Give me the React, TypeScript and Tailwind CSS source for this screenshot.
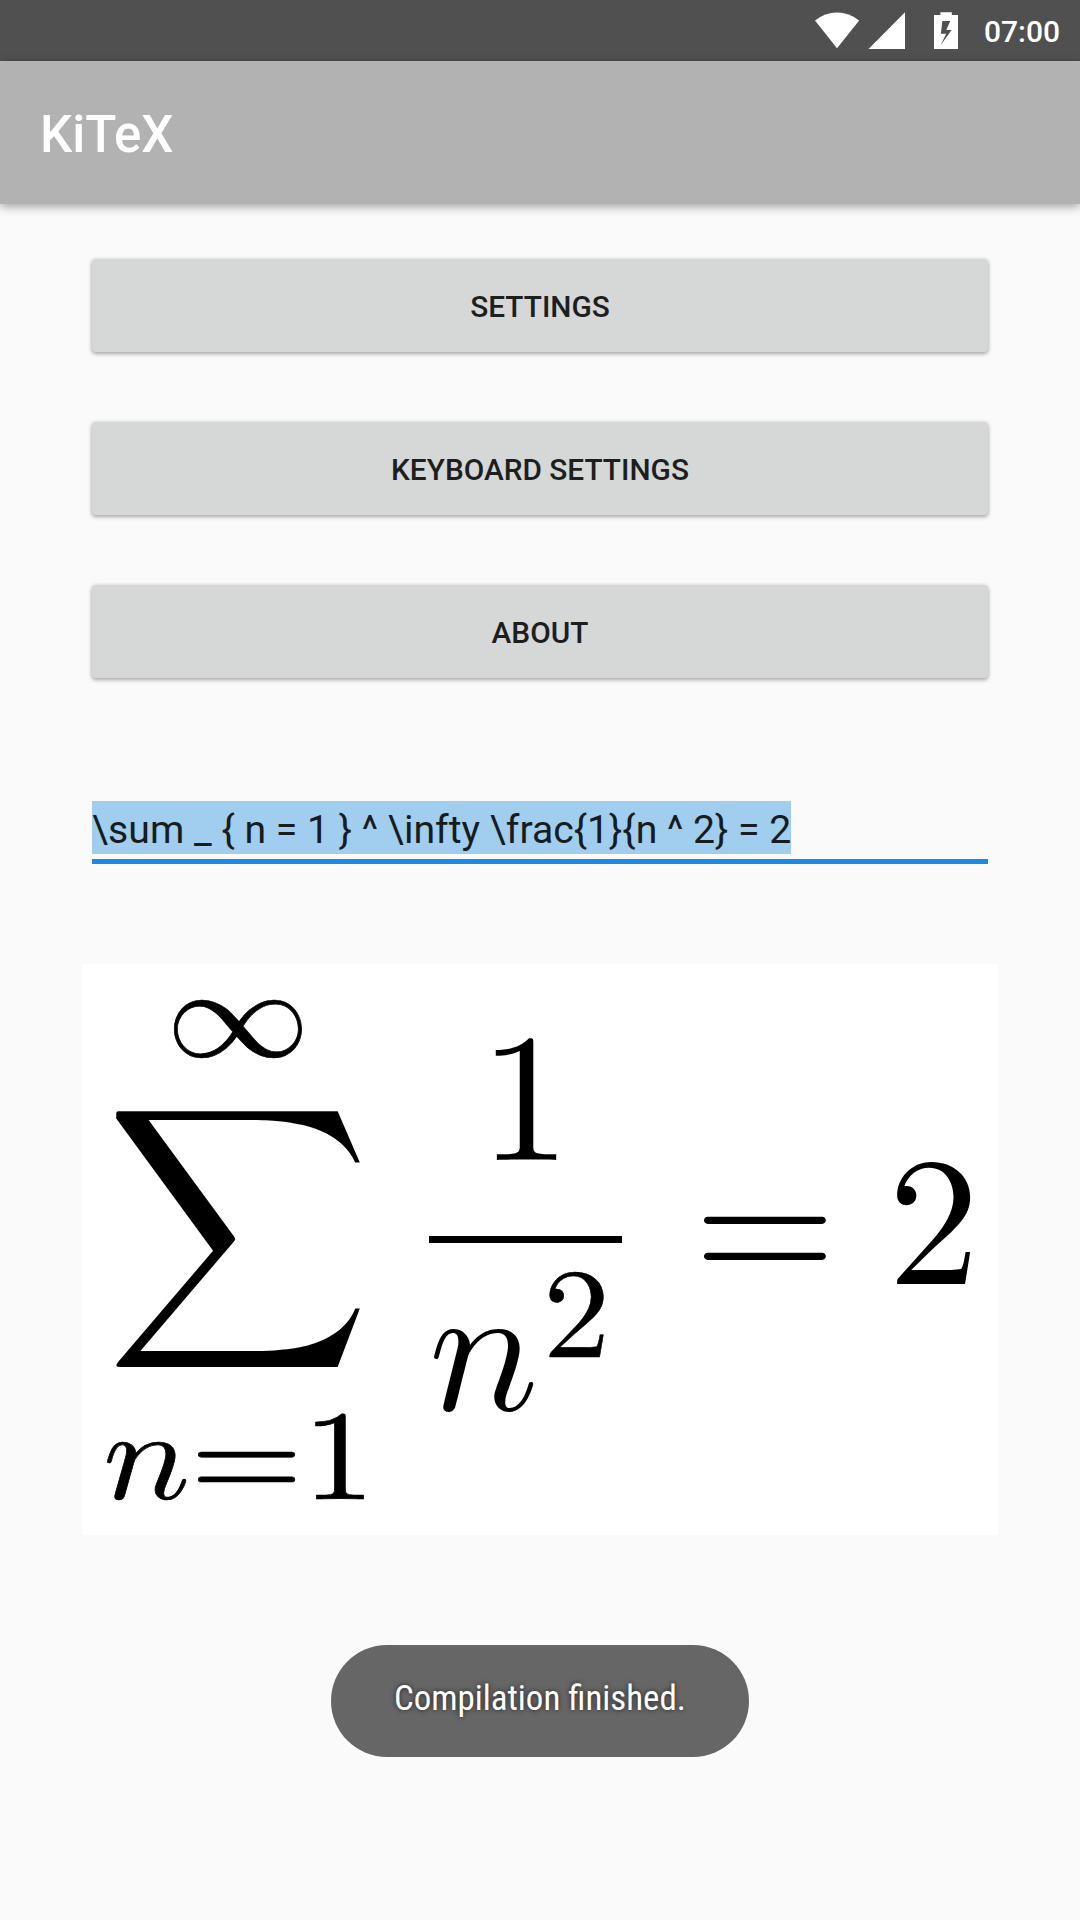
function StatusBar() {
  return (
    <header className="flex h-[61px] items-start justify-end bg-[#505050] pr-[20px] text-white">
      <svg className="h-[61px] w-[160px] shrink-0" viewBox="812 0 160 61" fill="#fff">
        <path d="M837 48.3 815 20.6Q825 12.6 837 12.6T859.2 20.6Z" />
        <path d="M868.5 49 905 12.2V49Z" />
        <path
          fillRule="evenodd"
          d="M940.4 12.2H951.8V15H958V49H934V15H940.4ZM942.3 21 940.9 33.8H946.2L940.6 45.2 951.6 29.9H946.3L950.3 21Z"
        />
      </svg>
      <span className="mt-[12px] ml-[12px] font-[Roboto,sans-serif] text-[30px] leading-[40px] font-medium">07:00</span>
    </header>
  );
}

function WideButton({ label }: { label: string }) {
  return (
    <button className="flex h-[93px] w-full items-center justify-center rounded-[4px] bg-[#d6d8d7] pt-[3px] text-[29.8px] font-medium text-[#1d1e1e] shadow-[0_2px_4px_rgba(0,0,0,0.3),0_0_4px_rgba(0,0,0,0.12)]">
      {label}
    </button>
  );
}

function Formula() {
  return (
    <div className="-mx-[10px] mt-[100px] flex h-[571px] w-[916px] items-start bg-white pt-[36px] pl-[24px] text-black">
      <math display="block" className="m-0 w-auto font-['Latin_Modern_Math','Liberation_Serif',math] text-[183px]">
        <mrow>
          <munderover>
            <mo lspace="0" rspace="0.167em">∑</mo>
            <mrow className="origin-center translate-x-[1px] scale-x-[1.13] [-webkit-text-stroke:0.7px_black]">
              <mspace height="102px" />
              <mi>n</mi>
              <mo lspace="0" rspace="0">=</mo>
              <mn>1</mn>
            </mrow>
            <mrow className="origin-center scale-x-[1.12] [-webkit-text-stroke:0.7px_black]">
              <mi>∞</mi>
              <mspace depth="17px" />
            </mrow>
          </munderover>
          <mspace width="28px" />
          <mfrac>
            <mn>1</mn>
            <mrow>
              <msup>
                <mi>n</mi>
                <mrow>
                  <mspace width="4px" />
                  <mn className="origin-left scale-x-[1.05] [-webkit-text-stroke:0.5px_black]">2</mn>
                </mrow>
              </msup>
              <mspace width="5px" />
            </mrow>
          </mfrac>
          <mspace width="21px" />
          <mo>=</mo>
          <mspace width="1px" />
          <mn>2</mn>
        </mrow>
      </math>
    </div>
  );
}

export default function App() {
  return (
    <div className="flex h-[1920px] w-[1080px] flex-col overflow-hidden bg-[#fafafa] font-[Roboto,sans-serif]">
      <StatusBar />
      <div className="flex h-[143px] shrink-0 items-center bg-[#b2b2b2] pt-[5px] pl-[40px] shadow-[0_3px_9px_rgba(0,0,0,0.34)]">
        <h1 className="text-[51px] leading-[60px] font-medium text-white">KiTeX</h1>
      </div>
      <main className="flex flex-col px-[92px] pt-[55px]">
        <div className="flex flex-col gap-[70px]">
          <WideButton label="SETTINGS" />
          <WideButton label="KEYBOARD SETTINGS" />
          <WideButton label="ABOUT" />
        </div>
        <div className="mt-[123px] h-[63px] border-b-[5px] border-[#1b8ae0]">
          <span className="inline-block h-[53px] bg-[#a1cdef] pt-[3px] text-[39.2px] leading-[53px] whitespace-pre text-[#161c20]">
            {"\\sum _ { n = 1 } ^ \\infty \\frac{1}{n ^ 2} = 2"}
          </span>
        </div>
        <Formula />
      </main>
      <div className="mt-[110px] flex h-[112px] w-[418px] items-center justify-center self-center rounded-full bg-[#666] pb-[4px] font-['Roboto_Condensed',Roboto,sans-serif] text-[34.9px] text-white [text-shadow:0_0_5px_rgba(0,0,0,0.7)]">
        Compilation finished.
      </div>
    </div>
  );
}
